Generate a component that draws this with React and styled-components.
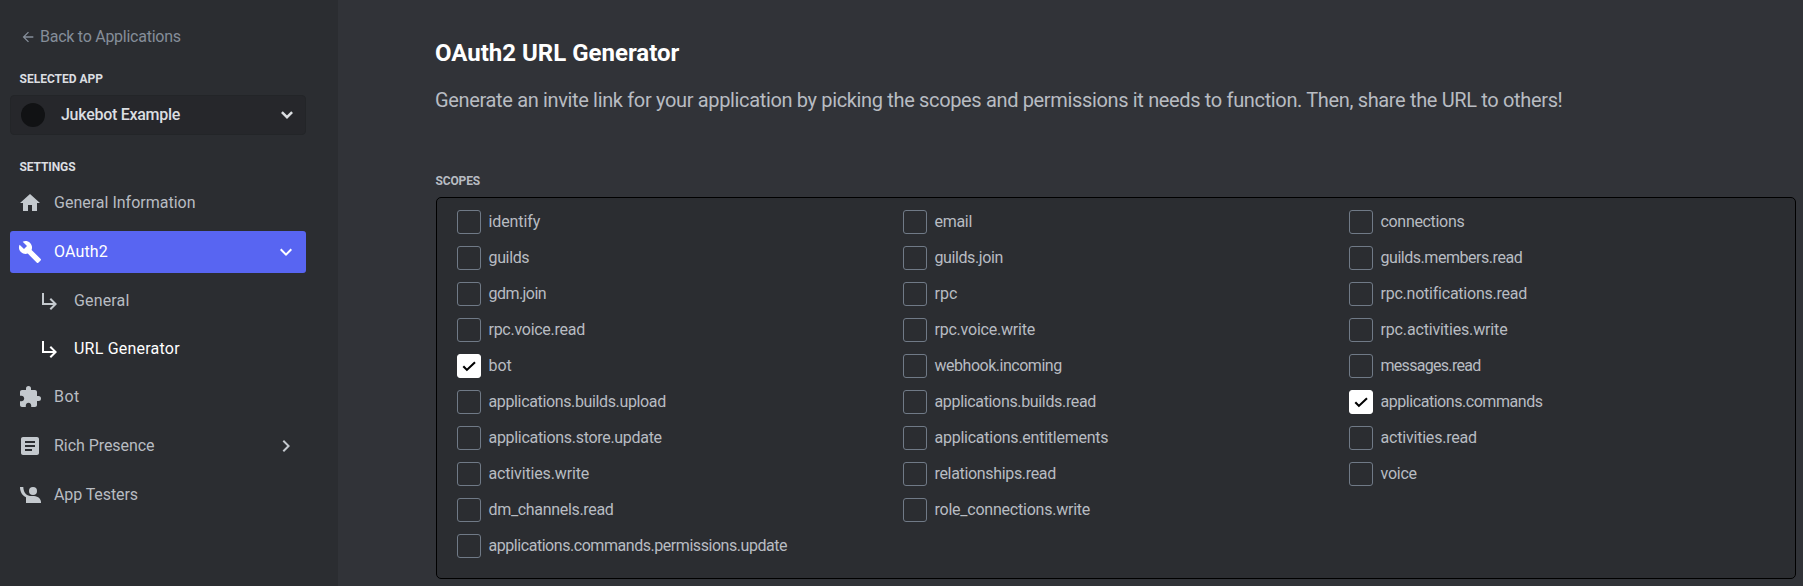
import React, { useState } from "react";
import styled, { createGlobalStyle } from "styled-components";
import {
  MdArrowBack,
  MdArticle,
  MdBuild,
  MdChevronRight,
  MdExpandMore,
  MdExtension,
  MdHome,
  MdSubdirectoryArrowRight,
} from "react-icons/md";

const GlobalStyle = createGlobalStyle`
  *, *::before, *::after { box-sizing: border-box; }
  body {
    margin: 0;
    background: #313338;
    color: #b8bcc2;
    font: 400 16px/20px Roboto, "Noto Sans", sans-serif;
  }
  svg { display: block; flex: none; }
`;

const Page = styled.div`
  display: flex;
  height: 586px;
  overflow: hidden;
`;

const Sidebar = styled.nav`
  flex: none;
  width: 338px;
  padding: 27px 32px 0 10px;
  background: #2b2d31;
`;

const BackLink = styled.a`
  display: flex;
  align-items: center;
  gap: 4px;
  height: 20px;
  padding-left: 10px;
  color: #858d99;
  letter-spacing: -0.26px;
`;

const SectionLabel = styled.h2`
  margin: ${(p) => p.$top}px 0 ${(p) => p.$bottom}px;
  padding-left: 9.5px;
  color: #dbdee1;
  font-size: 12px;
  font-weight: 700;
  line-height: 16px;
  letter-spacing: ${(p) => p.$track || 0}px;
`;

const AppSelect = styled.button`
  display: flex;
  align-items: center;
  width: 100%;
  height: 40px;
  padding: 0 6px 0 10px;
  border: 1px solid #232528;
  border-radius: 4px;
  background: #26272b;
  color: #dbdee1;
  font: inherit;
  font-weight: 500;
  letter-spacing: -0.28px;
  text-align: left;
`;

const Avatar = styled.span`
  width: 24px;
  height: 24px;
  margin-right: 16px;
  border-radius: 50%;
  background: #111214;
`;

const AppName = styled.span`
  flex: 1;
`;

const NavList = styled.ul`
  display: flex;
  flex-direction: column;
  gap: 7px;
  margin: 0;
  padding: 0;
  list-style: none;
`;

const NavItem = styled.li`
  display: flex;
  align-items: center;
  gap: 12px;
  height: ${(p) => (p.$nested ? 41 : 42)}px;
  padding: ${(p) => (p.$nested ? "1px 8px 0 28px" : "0 8px")};
  border-radius: 3px;
  background: ${(p) => (p.$selected ? "#5865f2" : "transparent")};
  color: ${(p) => (p.$selected || p.$current ? "#fff" : "#b8bcc2")};
  > svg { color: ${(p) => (p.$selected || p.$current ? "#fff" : "#c4c9ce")}; }
`;

const NavLabel = styled.span`
  flex: 1;
  letter-spacing: ${(p) => p.$track}px;
`;

const Main = styled.main`
  flex: 1;
  min-width: 0;
  padding: 38px 7px 0 98px;
`;

const Title = styled.h1`
  margin: 0 0 0 -1px;
  color: #fff;
  font-size: 24px;
  font-weight: 700;
  line-height: 30px;
`;

const Lead = styled.p`
  margin: 20px 0 0 -1px;
  font-size: 20px;
  line-height: 24px;
  letter-spacing: -0.347px;
`;

const ScopesLabel = styled.h3`
  margin: 61px 0 7px -0.5px;
  font-size: 12px;
  font-weight: 700;
  line-height: 17px;
  letter-spacing: -0.15px;
`;

const ScopeGrid = styled.div`
  display: grid;
  grid-template-columns: repeat(3, 446px);
  grid-auto-rows: 24px;
  row-gap: 12px;
  height: 382px;
  padding: 12px 0 0 20px;
  border: 1px solid #000;
  border-radius: 5px;
  background: #2b2d31;
`;

const Scope = styled.label`
  display: flex;
  align-items: center;
  gap: 7.5px;
`;

const HiddenInput = styled.input`
  display: none;
`;

const Box = styled.span`
  display: grid;
  place-items: center;
  width: 24px;
  height: 24px;
  border: 1px solid ${(p) => (p.$on ? "#fff" : "#707a87")};
  border-radius: 3px;
  background: ${(p) => (p.$on ? "#fff" : "transparent")};
`;

const ScopeName = styled.span`
  letter-spacing: ${(p) => p.$track}px;
`;

function WavingPerson() {
  return (
    <svg width="24" height="24" viewBox="0 0 24 24" fill="currentColor">
      <circle cx="15" cy="8" r="4" />
      <path d="M2 4h3.3c.2 4.600 2.200 8.200 6.700 9h4c4.500.4 7 3.200 7 6v1H8v-5.700C4 12.500 2 8.500 2 4z" />
    </svg>
  );
}

function SelectChevron() {
  return (
    <svg width="24" height="24" viewBox="0 0 24 24" fill="none" stroke="currentColor" strokeWidth="2.500">
      <path d="M6.900 9.200 12 14.200 17.100 9.200" />
    </svg>
  );
}

function CheckMark() {
  return (
    <svg width="22" height="22" viewBox="0 0 22 22" fill="none" stroke="#000" strokeWidth="2.100">
      <path d="M5.300 11.300 8.900 14.900 17 7.200" />
    </svg>
  );
}

const NAV = [
  { label: "General Information", icon: MdHome, track: 0 },
  { label: "OAuth2", icon: MdBuild, track: 0.15, selected: true, arrow: MdExpandMore },
  { label: "General", icon: MdSubdirectoryArrowRight, track: 0.15, nested: true },
  { label: "URL Generator", icon: MdSubdirectoryArrowRight, track: 0.22, nested: true, current: true },
  { label: "Bot", icon: MdExtension, track: 0.5 },
  { label: "Rich Presence", icon: MdArticle, track: -0.05, arrow: MdChevronRight },
  { label: "App Testers", icon: WavingPerson, track: -0.1 },
];

/* Scope name and its letter spacing, in reading order across three columns. */
const SCOPES = [
  ["identify", -0.1], ["email", -0.3], ["connections", -0.32],
  ["guilds", -0.35], ["guilds.join", -0.4], ["guilds.members.read", -0.46],
  ["gdm.join", -0.55], ["rpc", 0], ["rpc.notifications.read", -0.23],
  ["rpc.voice.read", -0.27], ["rpc.voice.write", -0.22], ["rpc.activities.write", -0.15],
  ["bot", 0], ["webhook.incoming", -0.48], ["messages.read", -0.7],
  ["applications.builds.upload", -0.36], ["applications.builds.read", -0.34], ["applications.commands", -0.45],
  ["applications.store.update", -0.3], ["applications.entitlements", -0.25], ["activities.read", -0.2],
  ["activities.write", -0.15], ["relationships.read", -0.33], ["voice", -0.25],
  ["dm_channels.read", -0.32], ["role_connections.write", -0.23], null,
  ["applications.commands.permissions.update", -0.45],
];

export default function App() {
  const [checked, setChecked] = useState(["bot", "applications.commands"]);
  const toggle = (name) =>
    setChecked((list) =>
      list.includes(name) ? list.filter((n) => n !== name) : [...list, name]
    );

  return (
    <Page>
      <GlobalStyle />
      <Sidebar>
        <BackLink><MdArrowBack size={16} />Back to Applications</BackLink>
        <SectionLabel $top={24} $bottom={8}>SELECTED APP</SectionLabel>
        <AppSelect>
          <Avatar />
          <AppName>Jukebot Example</AppName>
          <SelectChevron />
        </AppSelect>
        <SectionLabel $top={24} $bottom={7} $track={-0.1}>SETTINGS</SectionLabel>
        <NavList>
          {NAV.map(({ label, icon: Icon, track, selected, nested, current, arrow: Arrow }) => (
            <NavItem key={label} $selected={selected} $nested={nested} $current={current}>
              <Icon size={24} />
              <NavLabel $track={track}>{label}</NavLabel>
              {Arrow && <Arrow size={24} />}
            </NavItem>
          ))}
        </NavList>
      </Sidebar>
      <Main>
        <Title>OAuth2 URL Generator</Title>
        <Lead>
          Generate an invite link for your application by picking the scopes and permissions it
          needs to function. Then, share the URL to others!
        </Lead>
        <ScopesLabel>SCOPES</ScopesLabel>
        <ScopeGrid>
          {SCOPES.map((scope) => {
            if (!scope) return <span key="gap" />;
            const [name, track] = scope;
            const on = checked.includes(name);
            return (
              <Scope key={name}>
                <HiddenInput type="checkbox" checked={on} onChange={() => toggle(name)} />
                <Box $on={on}>{on && <CheckMark />}</Box>
                <ScopeName $track={track}>{name}</ScopeName>
              </Scope>
            );
          })}
        </ScopeGrid>
      </Main>
    </Page>
  );
}
